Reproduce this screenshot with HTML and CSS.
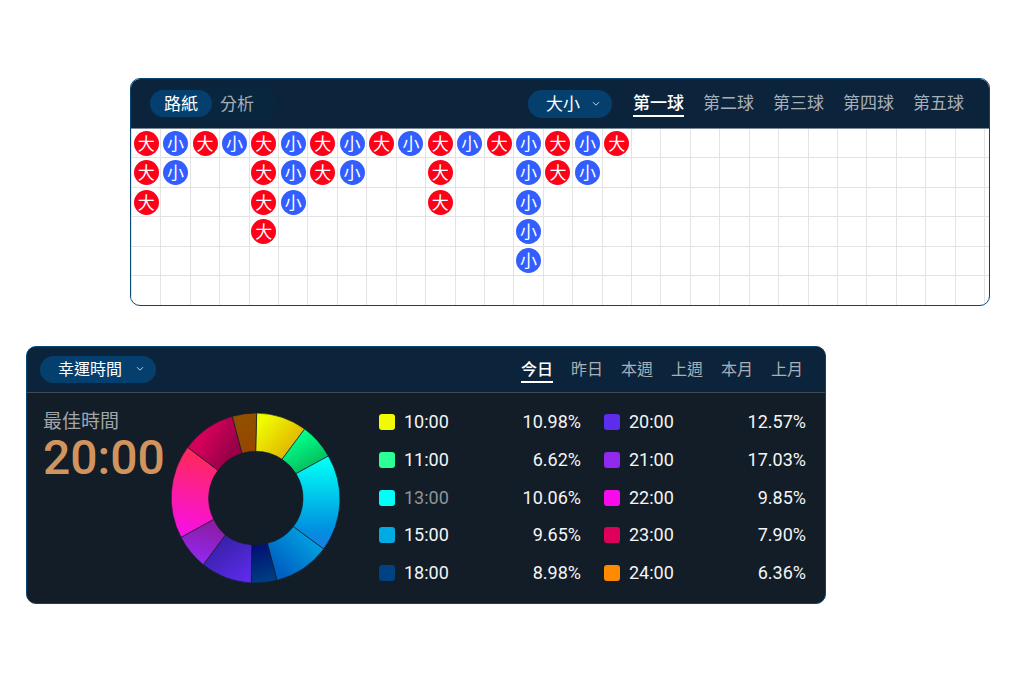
FILE: index.html
```html
<!DOCTYPE html>
<html lang="zh-Hant">
<head>
<meta charset="utf-8">
<meta name="viewport" content="width=device-width, initial-scale=1">
<title>路紙與幸運時間</title>
<link rel="stylesheet" href="styles.css">
</head>
<body>
<section class="panel panel-road">
  <header class="bar bar-road">
    <div class="segment">
      <button type="button" class="segment-item is-active">路紙</button>
      <button type="button" class="segment-item">分析</button>
    </div>
    <div class="picker picker-type">
      <select class="picker-select" aria-label="玩法"><option>大小</option></select>
      <svg class="picker-arrow" viewBox="0 0 8 6" aria-hidden="true"><path d="M1 1.2 L4 4.2 L7 1.2"/></svg>
    </div>
    <nav class="tabs tabs-ball">
      <button type="button" class="tab is-active">第一球</button>
      <button type="button" class="tab">第二球</button>
      <button type="button" class="tab">第三球</button>
      <button type="button" class="tab">第四球</button>
      <button type="button" class="tab">第五球</button>
    </nav>
  </header>
  <div class="road" id="road"></div>
</section>

<section class="panel panel-luck">
  <header class="bar bar-luck">
    <div class="picker picker-luck">
      <select class="picker-select" aria-label="統計項目"><option>幸運時間</option></select>
      <svg class="picker-arrow" viewBox="0 0 8 6" aria-hidden="true"><path d="M1 1.2 L4 4.2 L7 1.2"/></svg>
    </div>
    <nav class="tabs tabs-range">
      <button type="button" class="tab is-active">今日</button>
      <button type="button" class="tab">昨日</button>
      <button type="button" class="tab">本週</button>
      <button type="button" class="tab">上週</button>
      <button type="button" class="tab">本月</button>
      <button type="button" class="tab">上月</button>
    </nav>
  </header>
  <div class="luck">
    <div class="best">
      <p class="best-label">最佳時間</p>
      <p class="best-time">20:00</p>
    </div>
    <svg class="donut" viewBox="33 38 510 510" role="img" aria-label="時間分佈">
      <defs>
        <linearGradient id="g1" gradientUnits="userSpaceOnUse" x1="300" y1="70" x2="400" y2="160"><stop offset="0" stop-color="#f0fb00"/><stop offset="1" stop-color="#dfb000"/></linearGradient>
        <linearGradient id="g2" gradientUnits="userSpaceOnUse" x1="410" y1="110" x2="460" y2="200"><stop offset="0" stop-color="#00ff8b"/><stop offset="1" stop-color="#05bd5c"/></linearGradient>
        <linearGradient id="g3" gradientUnits="userSpaceOnUse" x1="470" y1="180" x2="470" y2="440"><stop offset="0" stop-color="#00fff6"/><stop offset=".8" stop-color="#0090e0"/><stop offset="1" stop-color="#187ee2"/></linearGradient>
        <linearGradient id="g4" gradientUnits="userSpaceOnUse" x1="440" y1="400" x2="345" y2="500"><stop offset="0" stop-color="#00a0df"/><stop offset="1" stop-color="#0060c3"/></linearGradient>
        <linearGradient id="g5" gradientUnits="userSpaceOnUse" x1="290" y1="440" x2="325" y2="545"><stop offset="0" stop-color="#001273"/><stop offset="1" stop-color="#004084"/></linearGradient>
        <linearGradient id="g6" gradientUnits="userSpaceOnUse" x1="185" y1="430" x2="260" y2="540"><stop offset="0" stop-color="#3b22ae"/><stop offset="1" stop-color="#5d2bec"/></linearGradient>
        <linearGradient id="g7" gradientUnits="userSpaceOnUse" x1="150" y1="370" x2="120" y2="480"><stop offset="0" stop-color="#8c1da4"/><stop offset="1" stop-color="#9227ec"/></linearGradient>
        <linearGradient id="g8" gradientUnits="userSpaceOnUse" x1="120" y1="165" x2="75" y2="400"><stop offset="0" stop-color="#ff285f"/><stop offset="1" stop-color="#f710e4"/></linearGradient>
        <linearGradient id="g9" gradientUnits="userSpaceOnUse" x1="130" y1="110" x2="215" y2="160"><stop offset="0" stop-color="#d4005a"/><stop offset="1" stop-color="#980048"/></linearGradient>
        <linearGradient id="g10" gradientUnits="userSpaceOnUse" x1="250" y1="50" x2="265" y2="150"><stop offset="0" stop-color="#915000"/><stop offset="1" stop-color="#964600"/></linearGradient>
      </defs>
      <g class="slices">
        <path fill="url(#g1)" d="M290 38A255 255 0 0 1 434 86L366 177A140 140 0 0 0 287 153Z"/>
        <path fill="url(#g2)" d="M434 86A255 255 0 0 1 505 167L408 220A140 140 0 0 0 366 177Z"/>
        <path fill="url(#g3)" d="M505 167A255 255 0 0 1 491 446L400 379A140 140 0 0 0 408 220Z"/>
        <path fill="url(#g4)" d="M491 446A255 255 0 0 1 351 540L322 429A140 140 0 0 0 400 379Z"/>
        <path fill="url(#g5)" d="M351 540A255 255 0 0 1 274 548L275 433A140 140 0 0 0 322 429Z"/>
        <path fill="url(#g6)" d="M274 548A255 255 0 0 1 130 493L196 404A140 140 0 0 0 275 433Z"/>
        <path fill="url(#g7)" d="M130 493A255 255 0 0 1 63 411L161 357A140 140 0 0 0 196 404Z"/>
        <path fill="url(#g8)" d="M63 411A255 255 0 0 1 83 141L174 210A140 140 0 0 0 161 357Z"/>
        <path fill="url(#g9)" d="M83 141A255 255 0 0 1 217 48L246 159A140 140 0 0 0 174 210Z"/>
        <path fill="url(#g10)" d="M217 48A255 255 0 0 1 290 38L287 153A140 140 0 0 0 246 159Z"/>
      </g>
    </svg>
    <ul class="legend">
      <li class="entry"><i class="swatch c10"></i><span class="hour">10:00</span><span class="share">10.98%</span></li>
      <li class="entry"><i class="swatch c11"></i><span class="hour">11:00</span><span class="share">6.62%</span></li>
      <li class="entry"><i class="swatch c13"></i><span class="hour is-dim">13:00</span><span class="share">10.06%</span></li>
      <li class="entry"><i class="swatch c15"></i><span class="hour">15:00</span><span class="share">9.65%</span></li>
      <li class="entry"><i class="swatch c18"></i><span class="hour">18:00</span><span class="share">8.98%</span></li>
      <li class="entry"><i class="swatch c20"></i><span class="hour">20:00</span><span class="share">12.57%</span></li>
      <li class="entry"><i class="swatch c21"></i><span class="hour">21:00</span><span class="share">17.03%</span></li>
      <li class="entry"><i class="swatch c22"></i><span class="hour">22:00</span><span class="share">9.85%</span></li>
      <li class="entry"><i class="swatch c23"></i><span class="hour">23:00</span><span class="share">7.90%</span></li>
      <li class="entry"><i class="swatch c24"></i><span class="hour">24:00</span><span class="share">6.36%</span></li>
    </ul>
  </div>
</section>
<script src="road.js"></script>
</body>
</html>
```

FILE: styles.css
```css
* { box-sizing: border-box; }

body {
  margin: 0;
  padding: 78px 24px 40px 26px;
  display: flex;
  flex-direction: column;
  gap: 40px;
  background: #fff;
  font-family: Roboto, "Noto Sans CJK TC", sans-serif;
}

button, select {
  margin: 0;
  padding: 0;
  border: 0;
  background: none;
  color: inherit;
  font: inherit;
  cursor: pointer;
}

.panel {
  width: 100%;
  border: 1px solid #084672;
  border-radius: 10px;
  overflow: hidden;
}

.panel-road { max-width: 860px; align-self: flex-end; background: #fff; }
.panel-luck { max-width: 800px; background: #131d27; }

.bar {
  display: flex;
  align-items: center;
  background: #0c243b;
  color: #fff;
}

.bar-road {
  height: 50px;
  padding: 0 25px 0 17px;
  border-bottom: 1px solid #7b8a98;
  font-size: 17px;
  line-height: 24px;
}

.bar-luck {
  height: 46px;
  padding: 0 22px 0 13px;
  border-bottom: 1px solid #404a57;
  font-size: 16px;
  line-height: 22px;
}

.segment {
  display: flex;
  margin-right: auto;
  padding: 3px 2px;
  border-radius: 17px;
  background: #09263f;
}

.segment-item {
  width: 62px;
  height: 27px;
  padding: 0 8px;
  border-radius: 14px;
  color: #a7adb5;
  text-align: left;
}

.segment-item.is-active {
  background: #053f6e;
  color: #fff;
  text-align: center;
}

.picker {
  position: relative;
  display: flex;
  align-items: center;
}

.picker-select {
  width: 100%;
  height: 100%;
  padding: 1px 18px 0;
  border-radius: 14px;
  background: #053f6e;
  color: #fff;
  appearance: none;
}

.picker-arrow {
  position: absolute;
  right: 12px;
  width: 8px;
  height: 6px;
  fill: none;
  stroke: #c3ced8;
  stroke-width: 1;
  pointer-events: none;
}

.picker-type { width: 84px; height: 28px; margin-right: 21px; }
.picker-luck { width: 116px; height: 27px; margin-right: auto; }

.tabs { display: flex; }
.tabs-ball { gap: 19px; padding-bottom: 2px; }
.tabs-range { gap: 18px; padding-top: 2px; }

.tab {
  padding-top: 2px;
  border-bottom: 2px solid transparent;
  color: #a9afb6;
  white-space: nowrap;
}

.tab.is-active {
  border-color: #fff;
  color: #fff;
  font-weight: 500;
}

.road {
  display: grid;
  grid-template-columns: repeat(29, 1fr) 5px;
  margin-bottom: -1px;
}

.cell {
  display: flex;
  align-items: center;
  justify-content: center;
  min-width: 0;
  aspect-ratio: 1;
  border: solid #e3e3e3;
  border-width: 0 0 1px 1px;
}

.cell-edge { aspect-ratio: auto; }

.bead {
  width: 25px;
  height: 25px;
  flex: none;
  border-radius: 50%;
  color: #fff;
  font-size: 17px;
  line-height: 26px;
  text-align: center;
}

.bead-big { background: #ff0019; }
.bead-small { background: #335eff; }

.luck {
  display: grid;
  grid-template-columns: 128px 170px 1fr;
  align-items: center;
  padding: 11px 19px 11px 16px;
}

.best { align-self: start; padding-top: 6px; white-space: nowrap; }
.best p { margin: 0; }

.best-label {
  color: #a1a5a9;
  font-size: 19px;
  line-height: 24px;
}

.best-time {
  color: #d2945f;
  font-size: 48px;
  font-weight: 500;
  line-height: 48px;
}

.donut { width: 170px; height: 170px; }
.slices { stroke: #131d27; stroke-width: 2; }

.legend {
  display: grid;
  grid-template-rows: repeat(5, 1fr);
  grid-auto-columns: 1fr;
  grid-auto-flow: column;
  column-gap: 23px;
  height: 188px;
  margin: 0 0 0 38px;
  padding: 0;
  list-style: none;
}

.entry {
  display: flex;
  align-items: center;
  color: #f4f5f6;
  font-size: 18px;
  line-height: 24px;
}

.swatch {
  width: 16px;
  height: 16px;
  margin-right: 9px;
  border-radius: 3px;
}

.hour.is-dim { color: #8f9499; }
.share { margin-left: auto; }

.c10 { background: #f0fb00; }
.c11 { background: #2cff96; }
.c13 { background: #00fff6; }
.c15 { background: #00aae5; }
.c18 { background: #004184; }
.c20 { background: #5d2ded; }
.c21 { background: #9229ef; }
.c22 { background: #f70bed; }
.c23 { background: #df005c; }
.c24 { background: #ff8a00; }
```

FILE: road.js
```js
// Length of each streak, starting with 大 and alternating with 小.
const streaks = [3, 2, 1, 1, 4, 3, 2, 2, 1, 1, 3, 1, 1, 5, 2, 2, 1];
const road = document.getElementById("road");

for (let row = 0; row < 6; row++) {
  for (let col = 0; col < 30; col++) {
    const cell = document.createElement("div");
    cell.className = col === 29 ? "cell cell-edge" : "cell";
    if (row < (streaks[col] || 0)) {
      const bead = document.createElement("span");
      const big = col % 2 === 0;
      bead.className = big ? "bead bead-big" : "bead bead-small";
      bead.textContent = big ? "大" : "小";
      cell.append(bead);
    }
    road.append(cell);
  }
}
```
